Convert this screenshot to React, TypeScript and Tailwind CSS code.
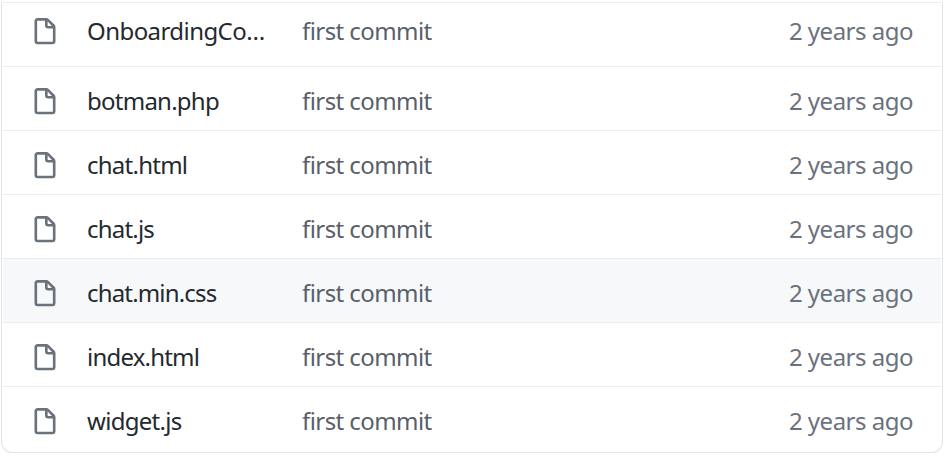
const FILE_PATH =
  'M3.75 1.5a.25.25 0 00-.25.25v11.5c0 .138.112.25.25.25h8.5a.25.25 0 00.25-.25V6H9.75A1.75 1.75 0 018 4.25V1.5H3.75zm5.75.56v2.19c0 .138.112.25.25.25h2.19L9.5 2.06zM2 1.75C2 .784 2.784 0 3.75 0h5.086c.464 0 .909.184 1.237.513l3.414 3.414c.329.328.513.773.513 1.237v8.086A1.75 1.75 0 0112.25 15h-8.5A1.75 1.75 0 012 13.25V1.75z';

type FileRow = { name: string; tracking: string; highlighted?: boolean };

const files: FileRow[] = [
  { name: 'OnboardingCo…', tracking: 'tracking-[-0.57px]' },
  { name: 'botman.php', tracking: 'tracking-[-0.75px]' },
  { name: 'chat.html', tracking: 'tracking-[-0.75px]' },
  { name: 'chat.js', tracking: 'tracking-[-0.8px]' },
  { name: 'chat.min.css', tracking: 'tracking-[-0.83px]', highlighted: true },
  { name: 'index.html', tracking: 'tracking-[-0.8px]' },
  { name: 'widget.js', tracking: 'tracking-[-0.7px]' },
];

function FileIcon() {
  return (
    <svg viewBox="0 0 16 16" className="h-7 w-7 shrink-0 fill-[#6a737d]" aria-hidden="true">
      <path fillRule="evenodd" d={FILE_PATH} />
    </svg>
  );
}

function Row({ file, first }: { file: FileRow; first: boolean }) {
  return (
    <li
      className={`flex h-16 items-start border-t border-[#eaecef] pr-[28px] pl-[28px] ${
        first ? 'pt-[15px]' : 'pt-[21px]'
      } ${file.highlighted ? 'bg-[#f6f8fa]' : ''}`}
    >
      <FileIcon />
      <span className={`ml-7 w-[215px] leading-[26px] whitespace-nowrap text-[#24292e] ${file.tracking}`}>
        {file.name}
      </span>
      <span className="flex-1 leading-[26px] tracking-[-0.57px] text-[#586069]">first commit</span>
      <span className="leading-[26px] tracking-[-0.5px] whitespace-nowrap text-[#6a737d]">2 years ago</span>
    </li>
  );
}

export default function App() {
  return (
    <main className="h-[465px] w-[950px] bg-white pt-[2px] pl-px font-['Noto_Sans','Open_Sans',sans-serif] text-[24px]">
      <ul className="h-[451px] w-[942px] rounded-b-[11px] border border-t-0 border-[#e1e4e8] px-px">
        {files.map((file, i) => (
          <Row key={file.name} file={file} first={i === 0} />
        ))}
      </ul>
    </main>
  );
}
